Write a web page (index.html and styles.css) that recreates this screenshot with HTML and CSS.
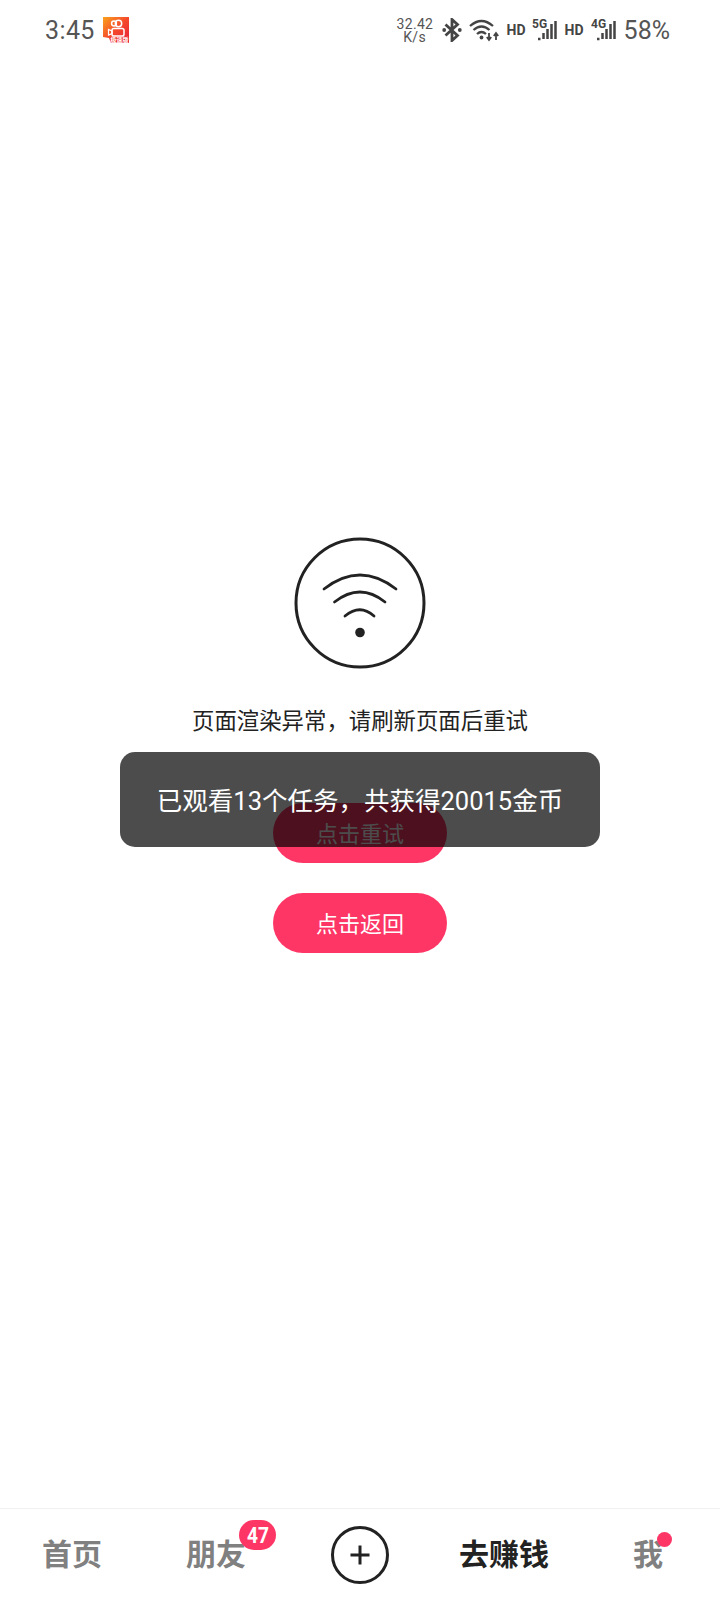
FILE: index.html
```html
<!DOCTYPE html>
<html lang="zh-CN">
<head>
    <meta charset="UTF-8">
    <meta name="viewport" content="width=device-width, initial-scale=1.0">
    <title>去赚钱</title>
    <link rel="stylesheet" href="styles.css">
</head>
<body>
    <div class="status-bar">
        <div class="status-left">
            <span class="time">3:45</span>
            <svg class="app-icon" width="26" height="26" viewBox="0 0 26 26">
                <defs>
                    <linearGradient id="appGrad" x1="0" y1="0" x2="1" y2="1">
                        <stop offset="0" stop-color="#fba31c"/>
                        <stop offset="0.5" stop-color="#f4492c"/>
                        <stop offset="1" stop-color="#e81e3c"/>
                    </linearGradient>
                </defs>
                <path d="M0 0H26V26H8L6 21L0 20Z" fill="url(#appGrad)"/>
                <circle cx="11" cy="6.500" r="2.400" fill="none" stroke="#fff" stroke-width="1.500"/>
                <circle cx="15.500" cy="6.500" r="3.200" fill="none" stroke="#fff" stroke-width="1.500"/>
                <rect x="9" y="11.500" width="12" height="7.500" rx="1.800" fill="none" stroke="#fff" stroke-width="1.500"/>
                <path d="M9 14L5.500 12.500V18L9 16.500Z" fill="none" stroke="#fff" stroke-width="1.200"/>
                <text x="7.500" y="25" class="app-tag">极速版</text>
            </svg>
        </div>
        <div class="status-right">
            <div class="speed">
                <div>32.42</div>
                <div>K/s</div>
            </div>
            <svg class="bt" width="20" height="24" viewBox="0 0 20 24">
                <path d="M3.500 6.500L15.500 17.500L10 22.500V1.500L15.500 6.500L3.500 17.500" fill="none" stroke="#444" stroke-width="2.800"/>
                <circle cx="2.200" cy="12" r="1.900" fill="#444"/>
                <circle cx="17.800" cy="12" r="1.900" fill="#444"/>
            </svg>
            <svg class="wifi" width="30" height="24" viewBox="0 0 30 24">
                <path d="M1 8Q12.500 -2 24 8M4.500 12Q12.500 5 20.500 12M8 16Q12.500 12 17 16" fill="none" stroke="#444" stroke-width="2.300"/>
                <circle cx="12.500" cy="19.500" r="1.900" fill="#444"/>
                <path d="M20 15V21M17.800 19L20 22L22.200 19" fill="none" stroke="#444" stroke-width="1.800"/>
                <path d="M27 22V16M24.800 18L27 15L29.200 18" fill="none" stroke="#444" stroke-width="1.800"/>
            </svg>
            <span class="hd hd-first">HD</span>
            <svg class="signal" width="25" height="24" viewBox="0 0 25 24">
                <text x="0" y="10" class="signal-text">5G</text>
                <path d="M6 21H8.500M11.500 21V15M15.500 21V11M19.500 21V6M23.500 21V3" fill="none" stroke="#444" stroke-width="2.500"/>
            </svg>
            <span class="hd">HD</span>
            <svg class="signal" width="25" height="24" viewBox="0 0 25 24">
                <text x="0" y="10" class="signal-text">4G</text>
                <path d="M6 21H8.500M11.500 21V15M15.500 21V11M19.500 21V6M23.500 21V3" fill="none" stroke="#444" stroke-width="2.500"/>
            </svg>
            <span class="battery">58%</span>
        </div>
    </div>

    <div class="main">
        <svg class="error-icon" width="134" height="134" viewBox="0 0 134 134">
            <circle cx="67" cy="67" r="64" fill="none" stroke="#222" stroke-width="3"/>
            <path d="M31 53Q67 25 103 53M41.500 66Q67 46 92 66M52 80Q67 67.400 81 80" fill="none" stroke="#222" stroke-width="2.800" stroke-linecap="round"/>
            <circle cx="67" cy="96.500" r="4.800" fill="#222"/>
        </svg>
        <div class="error-text">页面渲染异常&#65292;请刷新页面后重试</div>
        <div class="btn btn-retry">点击重试</div>
        <div class="btn">点击返回</div>
    </div>

    <div class="toast">已观看13个任务&#65292;共获得20015金币</div>

    <div class="tab-bar">
        <div class="tab">
            <span class="tab-label">首页</span>
        </div>
        <div class="tab">
            <span class="tab-label">朋友<span class="badge"><span class="badge-num">47</span></span></span>
        </div>
        <div class="tab">
            <svg width="60" height="60" viewBox="0 0 60 60">
                <circle cx="30" cy="30" r="27.500" fill="none" stroke="#222" stroke-width="3"/>
                <path d="M20.500 30H39.500M30 20.500V39.500" fill="none" stroke="#222" stroke-width="3"/>
            </svg>
        </div>
        <div class="tab active">
            <span class="tab-label">去赚钱</span>
        </div>
        <div class="tab">
            <span class="tab-label">我<span class="dot"></span></span>
        </div>
    </div>
</body>
</html>
```

FILE: styles.css
```css
body {
    font-family: Roboto, 'Noto Sans CJK SC', sans-serif;
    margin: 0;
    background-color: #fff;
    width: 720px;
    height: 1600px;
    display: flex;
    flex-direction: column;
    position: relative;
    overflow: hidden;
}

.status-bar {
    height: 60px;
    display: flex;
    align-items: center;
    justify-content: space-between;
    padding: 0 50px 0 45px;
    color: #555;
    flex-shrink: 0;
}

.status-left {
    display: flex;
    align-items: center;
    gap: 8px;
}

.time {
    font-size: 25px;
    letter-spacing: 0.4px;
}

.app-tag {
    font-family: 'Noto Sans CJK SC', sans-serif;
    font-size: 6px;
    font-weight: 700;
    fill: #fff;
}

.status-right {
    display: flex;
    align-items: center;
    gap: 8px;
}

.speed {
    font-size: 14px;
    line-height: 13px;
    letter-spacing: 0.3px;
    text-align: center;
    width: 36px;
    padding-top: 1px;
}

.bt {
    margin-left: 1px;
    margin-right: -1px;
}

.hd {
    font-size: 14px;
    font-weight: 700;
    width: 18px;
    color: #444;
}

.hd-first {
    margin-right: -1px;
}

.signal-text {
    font-family: Roboto, sans-serif;
    font-size: 12px;
    font-weight: 700;
    fill: #444;
}

.battery {
    font-size: 25px;
}

.main {
    flex: 1;
    display: flex;
    flex-direction: column;
    align-items: center;
    padding-top: 476px;
}

.error-icon {
    display: block;
}

.error-text {
    font-size: 22.4px;
    line-height: 32px;
    color: #222;
    margin-top: 35px;
}

.btn {
    width: 174px;
    height: 58px;
    padding-bottom: 2px;
    margin-top: 30px;
    border-radius: 30px;
    background-color: #fe3666;
    color: #fff;
    font-size: 22px;
    display: flex;
    align-items: center;
    justify-content: center;
}

.btn-retry {
    margin-top: 66px;
}

.toast {
    position: absolute;
    top: 752px;
    left: 120px;
    width: 480px;
    height: 92px;
    padding-bottom: 3px;
    border-radius: 15px;
    background-color: rgba(0,0,0,0.7);
    color: #fff;
    font-size: 25.5px;
    display: flex;
    align-items: center;
    justify-content: center;
}

.tab-bar {
    height: 91px;
    border-top: 1px solid #f0f0f0;
    display: grid;
    grid-template-columns: repeat(5, 1fr);
    flex-shrink: 0;
}

.tab {
    display: flex;
    align-items: center;
    justify-content: center;
    font-size: 30px;
    font-weight: 700;
    color: #808080;
}

.tab.active {
    color: #222;
}

.tab-label {
    position: relative;
    margin-bottom: 6px;
}

.badge {
    position: absolute;
    left: 53px;
    top: -10px;
    width: 37px;
    height: 30px;
    border-radius: 15px;
    background-color: #fe3666;
    color: #fff;
    font-size: 22.5px;
    line-height: 30px;
    text-align: center;
}

.badge-num {
    display: inline-block;
    transform: scaleX(0.85);
}

.dot {
    position: absolute;
    left: 24px;
    top: 2px;
    width: 15px;
    height: 15px;
    border-radius: 50%;
    background-color: #fe3666;
}
```
